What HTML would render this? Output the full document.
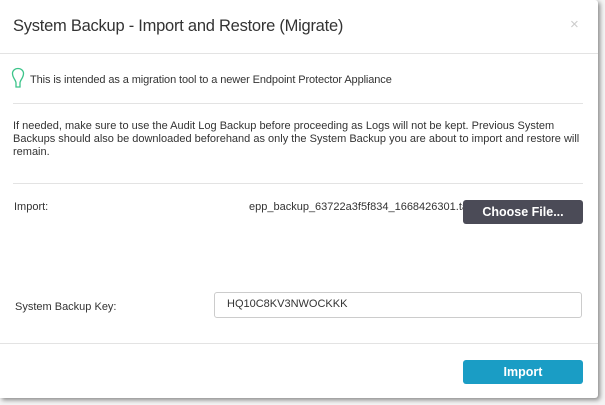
<!DOCTYPE html>
<html><head><style>
body{margin:0;width:605px;height:405px;background:#f4f4f4;font-family:"Liberation Sans",sans-serif;position:relative;overflow:hidden}
.d{position:absolute;left:0;top:0;width:598px;height:398px;background:#fff;box-shadow:2px 2px 5px rgba(0,0,0,.45);border-radius:0 3px 3px 0}
.t{position:absolute;font-size:11px;color:#333;white-space:nowrap}
.hr{position:absolute;height:1px;background:#e3e3e3}
.btn{position:absolute;color:#fff;font-size:12.5px;font-weight:bold;text-align:center;line-height:24px;border-radius:3px}
</style></head><body>
<div class="d">
<div class="t" style="left:13px;top:17px;font-size:16.5px;color:#333;letter-spacing:-0.25px">System Backup - Import and Restore (Migrate)</div>
<div class="t" style="left:570px;top:16px;font-size:15px;color:#ccc">×</div>
<div class="hr" style="left:0;top:53px;width:598px"></div>
<svg style="position:absolute;left:11px;top:67px" width="14" height="22" viewBox="0 0 14 22"><path d="M5 20 L5 16 C5 13 1.5 11 1.5 6.5 C1.5 3.5 4 1.5 7 1.5 C10 1.5 12.5 3.5 12.5 6.5 C12.5 11 9 13 9 16 L9 20 Z" fill="none" stroke="#3cc48a" stroke-width="1.3"/></svg>
<div class="t" style="left:30px;top:74px;letter-spacing:-0.1px">This is intended as a migration tool to a newer Endpoint Protector Appliance</div>
<div class="hr" style="left:13px;top:103px;width:570px"></div>
<div class="t" style="left:13px;top:120px;line-height:13px;white-space:normal;width:575px">If needed, make sure to use the Audit Log Backup before proceeding as Logs will not be kept. Previous System Backups should also be downloaded beforehand as only the System Backup you are about to import and restore will remain.</div>
<div class="hr" style="left:13px;top:183px;width:570px"></div>
<div class="t" style="left:14px;top:201px">Import:</div>
<div class="t" style="left:249px;top:201px;width:214px;overflow:hidden">epp_backup_63722a3f5f834_1668426301.tar</div>
<div class="btn" style="left:463px;top:200px;width:120px;background:#4b4b57">Choose File...</div>
<div class="t" style="left:15px;top:301px">System Backup Key:</div>
<div style="position:absolute;left:214px;top:292px;width:366px;height:24px;border:1px solid #ccc;border-radius:3px"></div>
<div class="t" style="left:227px;top:298px">HQ10C8KV3NWOCKKK</div>
<div class="hr" style="left:0;top:343px;width:598px"></div>
<div class="btn" style="left:463px;top:360px;width:120px;background:#1a9dc5">Import</div>
</div>
</body></html>
